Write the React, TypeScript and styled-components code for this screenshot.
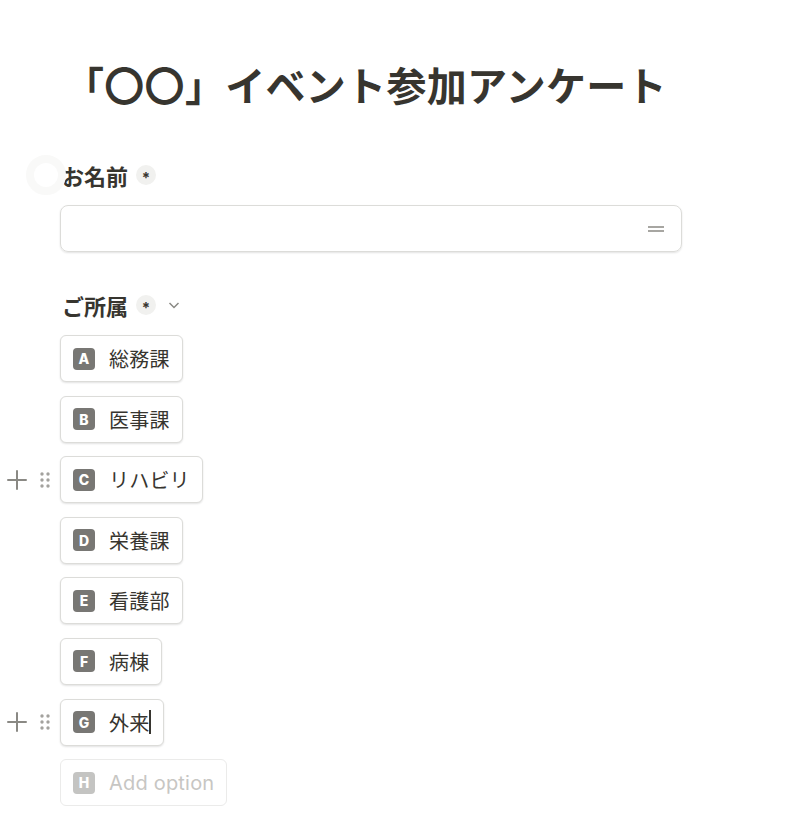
import styled, { createGlobalStyle } from 'styled-components';

const GlobalStyle = createGlobalStyle`
  body {
    margin: 0;
    background: #fff;
    font-family: Inter, "Noto Sans CJK JP", sans-serif;
    color: #37352f;
  }
`

interface Option {
  letter: string,
  label: string,
  hovered?: boolean,
  editing?: boolean
}

const options: Option[] = [
  {letter: 'A', label: '総務課'},
  {letter: 'B', label: '医事課'},
  {letter: 'C', label: 'リハビリ', hovered: true},
  {letter: 'D', label: '栄養課'},
  {letter: 'E', label: '看護部'},
  {letter: 'F', label: '病棟'},
  {letter: 'G', label: '外来', hovered: true, editing: true},
]

function PlusIcon() {
  return (
    <svg width="22" height="22" viewBox="0 0 22 22">
      <path d="M11 2v18M2 11h18" stroke="#8a8984" strokeWidth="2" strokeLinecap="round" />
    </svg>
  )
}

function DragIcon() {
  return (
    <svg width="12" height="18" viewBox="0 0 12 18">
      {[3, 9, 15].map(y => (
        <g key={y}>
          <circle cx="3" cy={y} r="1.7" fill="#a3a29e" />
          <circle cx="9" cy={y} r="1.7" fill="#a3a29e" />
        </g>
      ))}
    </svg>
  )
}

export default function App() {
  return (
    <>
      <GlobalStyle />
      <Page>
        <Title>「〇〇」イベント参加アンケート</Title>

        <Field>
          <LabelRow>
            <Ghost />
            <Label>お名前</Label>
            <Required>*</Required>
          </LabelRow>
          <Input>
            <svg width="18" height="8" viewBox="0 0 18 8">
              <path d="M1 2h16M1 6h16" stroke="#8a8984" strokeWidth="1.6" />
            </svg>
          </Input>
        </Field>

        <Field>
          <LabelRow>
            <Label>ご所属</Label>
            <Required>*</Required>
            <Chevron width="14" height="14" viewBox="0 0 14 14">
              <path d="M2.5 5l4.5 4.5L11.5 5" stroke="#8a8984" strokeWidth="1.5" fill="none" />
            </Chevron>
          </LabelRow>
          <OptionList>
            {options.map(opt => (
              <OptionRow key={opt.letter}>
                {opt.hovered && (
                  <Handles>
                    <PlusIcon />
                    <DragIcon />
                  </Handles>
                )}
                <OptionButton>
                  <Letter>{opt.letter}</Letter>
                  <OptionText>{opt.label}</OptionText>
                  {opt.editing && <Caret />}
                </OptionButton>
              </OptionRow>
            ))}
            <OptionRow>
              <OptionButton $placeholder>
                <Letter $placeholder>H</Letter>
                <OptionText $placeholder>Add option</OptionText>
              </OptionButton>
            </OptionRow>
          </OptionList>
        </Field>
      </Page>
    </>
  )
}

const Page = styled.div`
  padding: 60px 118px 0 60px;
`

const Title = styled.h1`
  margin: 0 0 46px 0;
  padding-left: 4px;
  font-size: 40px;
  line-height: 54px;
  font-weight: 700;
  letter-spacing: 0.3px;
  color: #37352f;
`

const Field = styled.div`
  margin-bottom: 38px;
`

const LabelRow = styled.div`
  position: relative;
  display: flex;
  align-items: center;
  height: 30px;
  margin-bottom: 15px;
  padding-left: 2px;
`

const Ghost = styled.div`
  position: absolute;
  left: -34px;
  top: -5px;
  width: 24px;
  height: 24px;
  border-radius: 50%;
  border: 8px solid #f9f9f8;
`

const Label = styled.span`
  font-size: 22px;
  font-weight: 700;
  color: #37352f;
`

const Required = styled.span`
  display: inline-flex;
  align-items: center;
  justify-content: center;
  width: 20px;
  height: 20px;
  margin-left: 8px;
  border-radius: 50%;
  background: #f1f1ef;
  font-size: 15px;
  font-weight: 700;
  color: #37352f;
  line-height: 1;
  padding-top: 4px;
  box-sizing: border-box;
`

const Chevron = styled.svg`
  margin-left: 11px;
`

const Input = styled.div`
  display: flex;
  align-items: center;
  justify-content: flex-end;
  height: 45px;
  padding-right: 16px;
  border: 1px solid #dcdcd9;
  border-radius: 8px;
  box-shadow: 0 1px 2px rgba(15, 15, 15, 0.12);
`

const OptionList = styled.div`
  display: flex;
  flex-direction: column;
  gap: 13.6px;
`

const OptionRow = styled.div`
  position: relative;
  display: flex;
`

const Handles = styled.div`
  position: absolute;
  left: -54px;
  top: 0;
  height: 47px;
  display: flex;
  align-items: center;
  gap: 11px;
`

const OptionButton = styled.div<{ $placeholder?: boolean }>`
  display: flex;
  align-items: center;
  height: 45px;
  padding: 0 12px 0 12px;
  border: 1px solid ${p => p.$placeholder ? '#ebebea' : '#dcdcd9'};
  border-radius: 6px;
  box-shadow: ${p => p.$placeholder ? 'none' : '0 1px 2px rgba(15, 15, 15, 0.12)'};
  background: #fff;
`

const Letter = styled.span<{ $placeholder?: boolean }>`
  display: inline-flex;
  align-items: center;
  justify-content: center;
  width: 22px;
  height: 22px;
  border-radius: 4px;
  background: ${p => p.$placeholder ? '#c4c4c2' : '#787774'};
  color: #fff;
  font-family: Inter, "Liberation Sans", sans-serif;
  font-size: 14px;
  font-weight: 800;
  margin-right: 14px;
`

const OptionText = styled.span<{ $placeholder?: boolean }>`
  font-size: 20px;
  color: ${p => p.$placeholder ? '#c7c6c3' : '#37352f'};
  letter-spacing: 0.2px;
`

const Caret = styled.span`
  display: inline-block;
  width: 1.5px;
  height: 24px;
  background: #37352f;
  margin-left: 0;
`
